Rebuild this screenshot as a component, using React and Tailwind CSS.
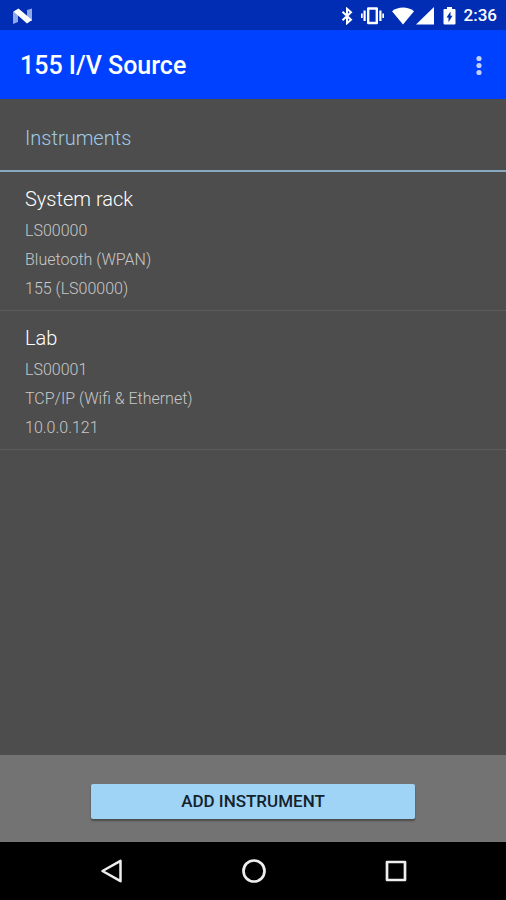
const instruments = [
  { name: 'System rack', serial: 'LS00000', link: 'Bluetooth (WPAN)', address: '155 (LS00000)' },
  { name: 'Lab', serial: 'LS00001', link: 'TCP/IP (Wifi & Ethernet)', address: '10.0.0.121' },
];

const StatusBar = () => (
  <div className="flex h-[30px] items-center justify-between bg-[#002db3] pt-px pr-[9px] pl-3 text-white">
    <svg width="22" height="18" viewBox="0 0 22 18" aria-hidden="true">
      <path d="M1 4.500 6 6v9l-5 2zM15 3l5-1.500V14l-5-2z" fill="#8fa8e6" />
      <path d="M1.500 4.500 6.500 1.500 20 13l-5 3.500z" fill="#fff" />
    </svg>
    <div className="flex items-center">
      <svg className="mr-2" width="12" height="18" viewBox="0 0 12 18" fill="none" stroke="currentColor" strokeWidth="2" aria-hidden="true">
        <path d="M1.500 4.800 10 12.700 6 16.200V1.800l4 3.500-8.500 7.900" />
      </svg>
      <svg className="mr-2" width="23" height="18" viewBox="0 0 23 18" aria-hidden="true">
        <path fill="none" stroke="currentColor" strokeWidth="2.400" d="M7.200 1.500h8.600v14.500H7.200z" strokeLinejoin="round" />
        <path fill="currentColor" d="M2.500 3.500h2.200v10.500H2.500zM18.300 3.500h2.200v10.500h-2.200zM0 6.500h1.700v4.500H0zM21.300 6.500H23v4.500h-1.700z" />
      </svg>
      <svg className="mr-0.5" width="22" height="18" viewBox="0 0 22 18" fill="currentColor" aria-hidden="true">
        <path d="M11 17.500 0 4.200C3 1.900 7 .6 11 .6s8 1.300 11 3.600z" />
      </svg>
      <svg className="mr-2" width="19" height="18" viewBox="0 0 19 18" fill="currentColor" aria-hidden="true">
        <path d="M18 0v17.500H0z" />
      </svg>
      <svg className="mr-2" width="13" height="18" viewBox="0 0 13 18" aria-hidden="true">
        <path fill="currentColor" d="M4 0h5v2h2.500q1 0 1 1v13.500q0 1-1 1h-10q-1 0-1-1V3q0-1 1-1H4z" />
        <path fill="#002db3" d="M7.500 4.500v4.300h2l-4 6.400v-4.700h-2z" />
      </svg>
      <span className="text-[17px] font-medium">2:36</span>
    </div>
  </div>
);

const AppBar = () => (
  <header className="flex h-[69px] items-center justify-between bg-[#0040ff] pt-0.5 pr-4 pl-5 text-white">
    <h1 className="text-[25px] font-medium">155 I/V Source</h1>
    <button type="button" aria-label="More options" className="px-2 py-3 text-[#c2d0ff]">
      <svg width="6" height="22" viewBox="0 0 6 22" fill="currentColor" aria-hidden="true">
        <circle cx="3" cy="3.500" r="2.600" />
        <circle cx="3" cy="10.500" r="2.600" />
        <circle cx="3" cy="17.500" r="2.600" />
      </svg>
    </button>
  </header>
);

const InstrumentItem = ({ instrument }) => (
  <li className="border-b border-[#5c5c5c] px-[25px] pt-2.5 pb-[7px] text-base leading-[29px] font-light text-[#c8c8c8]">
    <h3 className="text-xl leading-[34px] text-white">{instrument.name}</h3>
    <p>{instrument.serial}</p>
    <p>{instrument.link}</p>
    <p>{instrument.address}</p>
  </li>
);

const NavBar = () => (
  <nav className="flex h-[58px] items-center justify-center gap-[118px] bg-black pl-0.5 text-[#eeeeee]">
    <button type="button" aria-label="Back">
      <svg width="24" height="26" viewBox="0 0 24 26" fill="none" stroke="currentColor" strokeWidth="2.500" strokeLinejoin="round" aria-hidden="true">
        <path d="M2.500 13 20.500 2.800v20.400z" />
      </svg>
    </button>
    <button type="button" aria-label="Home">
      <svg width="24" height="26" viewBox="0 0 24 26" fill="none" stroke="currentColor" strokeWidth="2.700" aria-hidden="true">
        <circle cx="12" cy="13" r="10.500" />
      </svg>
    </button>
    <button type="button" aria-label="Recent apps">
      <svg width="24" height="26" viewBox="0 0 24 26" fill="none" stroke="currentColor" strokeWidth="2.700" strokeLinejoin="round" aria-hidden="true">
        <path d="M3 4h18v18H3z" />
      </svg>
    </button>
  </nav>
);

const App = () => {
  return (
    <div className="flex min-h-screen flex-col bg-[#4d4d4d] font-['Roboto',sans-serif]">
      <StatusBar />
      <AppBar />
      <main className="flex-1">
        <h2 className="border-b-2 border-[#86a9bf] px-[25px] pt-[23px] pb-4 text-xl leading-8 font-light text-[#9dcbe6]">
          Instruments
        </h2>
        <ul>
          {instruments.map(instrument => (
            <InstrumentItem key={instrument.serial} instrument={instrument} />
          ))}
        </ul>
      </main>
      <footer className="flex h-[87px] justify-center bg-[#727372] pt-[29px]">
        <button
          type="button"
          className="h-[35px] w-16/25 rounded-xs bg-[#9fd4f6] pt-px text-[17px] font-medium text-[#14222c] shadow-[0_2px_2px_rgba(0,0,0,0.35)]"
        >
          ADD INSTRUMENT
        </button>
      </footer>
      <NavBar />
    </div>
  );
};

export default App;
